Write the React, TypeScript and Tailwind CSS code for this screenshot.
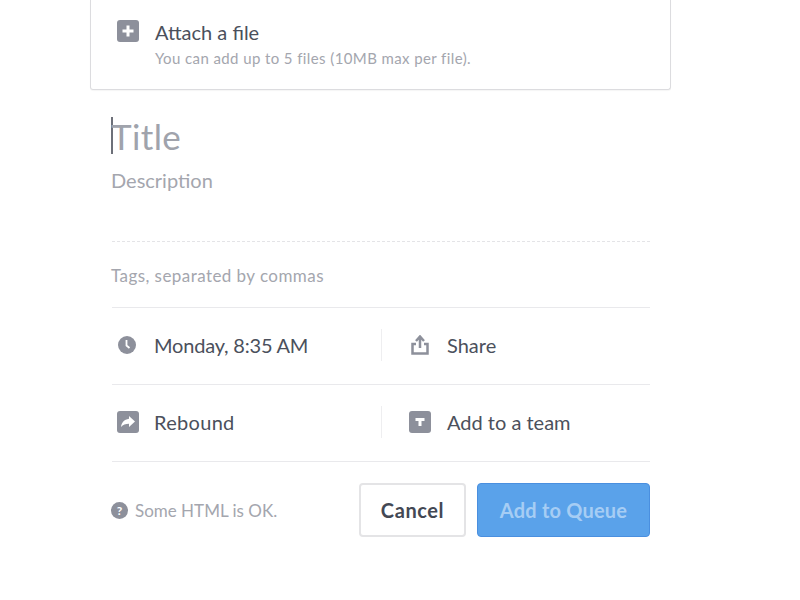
function Divider() {
  return <div className="ml-px h-px bg-[#e9e9ec]" />;
}

function Row({ left, leftLabel, leftClass, right, rightLabel }: { left: React.ReactNode; leftLabel: string; leftClass: string; right: React.ReactNode; rightLabel: string }) {
  return (
    <div className="flex h-[76px] items-center pb-[2px]">
      <div className="flex w-[270px] items-center">
        <div className="flex w-[43px] pl-[6px]">{left}</div>
        <span className={leftClass}>{leftLabel}</span>
      </div>
      <div className="h-[32px] w-px bg-[#eeeef0]" />
      <div className="flex items-center">
        <div className="flex w-[65px] pl-[27px]">{right}</div>
        <span className="text-[20px] text-[#4b505c]">{rightLabel}</span>
      </div>
    </div>
  );
}

export default function App() {
  return (
    <div className="h-[600px] w-[800px] overflow-hidden bg-white font-['Lato','Liberation_Sans',sans-serif]">
      <div className="ml-[90px] w-[581px]">
        <div className="flex h-[90px] rounded-b-[3px] border border-t-0 border-[#dcdcdf] pl-[26px] pt-[20px] shadow-[0_1px_1px_rgba(0,0,0,0.04)]">
          <svg width="22" height="22" viewBox="0 0 22 22" className="shrink-0">
            <rect width="22" height="22" rx="3" fill="#8d909b" />
            <path d="M11 5.500v11M5.500 11h11" stroke="#fff" strokeWidth="3" />
          </svg>
          <div className="ml-[16px]">
            <div className="-mt-px text-[20px] leading-[26px] text-[#4b505c]">Attach a file</div>
            <div className="mt-[3px] text-[15px] leading-[20px] tracking-[0.4px] text-[#a4a6ae]">You can add up to 5 files (10MB max per file).</div>
          </div>
        </div>

        <div className="ml-[21px] w-[539px]">
          <div className="mt-[27px] flex h-[37px] items-center">
            <div className="h-[37px] w-[2px] bg-[#6d7079]" />
            <span className="-ml-[2px] mt-[2px] text-[35px] leading-[37px] tracking-[0.4px] text-[#a0a3ac]">Title</span>
          </div>
          <div className="mt-[13px] text-[20px] leading-[26px] text-[#a4a6ae]">Description</div>
          <div className="mt-[48px] ml-px border-t border-dashed border-[#e4e4e7]" />
          <div className="mt-[23px] text-[17px] leading-[22px] tracking-[0.44px] text-[#a4a6ae]">Tags, separated by commas</div>
          <div className="mt-[20px]">
            <Divider />
          </div>
          <Row
            left={
              <svg width="18" height="18" viewBox="0 0 18 18" className="ml-px">
                <circle cx="9" cy="9" r="9" fill="#8d909b" />
                <path d="M8.500 4v5.500l3 2.500" fill="none" stroke="#fff" strokeWidth="1.800" />
              </svg>
            }
            leftLabel="Monday, 8:35 AM"
            leftClass="text-[20px] tracking-[-0.2px] text-[#4b505c]"
            right={
              <svg width="18" height="20" viewBox="0 0 18 20" fill="none" className="ml-[2px]">
                <path d="M9 13V3M5 6l4-4.500L13 6" stroke="#8d909b" strokeWidth="2.500" />
                <path d="M5 9H1.500v9.500h15V9H13" stroke="#8d909b" strokeWidth="2.500" />
              </svg>
            }
            rightLabel="Share"
          />
          <Divider />
          <Row
            left={
              <svg width="22" height="22" viewBox="0 0 22 22">
                <rect width="22" height="22" rx="3" fill="#8d909b" />
                <path d="M12 5l6 5.500-6 5.500v-3.300c-3.500 0-6 .8-8 3.300.5-4 3-7.500 8-8.200z" fill="#fff" />
              </svg>
            }
            leftLabel="Rebound"
            leftClass="text-[20px] tracking-[0.3px] text-[#4b505c]"
            right={
              <svg width="22" height="22" viewBox="0 0 22 22">
                <rect width="22" height="22" rx="3" fill="#8d909b" />
                <path d="M6.500 7h9v3h-3v5h-3v-5h-3z" fill="#fff" />
              </svg>
            }
            rightLabel="Add to a team"
          />
          <Divider />
          <div className="mt-[21px] flex items-center justify-between">
            <div className="flex items-center gap-[7px]">
              <svg width="17" height="17" viewBox="0 0 17 17">
                <circle cx="8.500" cy="8.500" r="8.500" fill="#8d909b" />
                <text x="8.500" y="12.800" textAnchor="middle" fontSize="12" fontWeight="700" fill="#fff">?</text>
              </svg>
              <span className="mt-px text-[17px] text-[#a4a6ae]">Some HTML is OK.</span>
            </div>
            <div className="flex gap-[11px]">
              <button className="h-[54px] w-[107px] rounded-[4px] border-2 border-[#e4e4e6] bg-white text-[20px] font-bold tracking-[0.6px] text-[#434854]">Cancel</button>
              <button className="h-[54px] w-[173px] rounded-[4px] border border-[#4a8fdf] bg-[#5aa2ea] text-[20px] font-bold tracking-[0.2px] text-[#a6cdf4]">Add to Queue</button>
            </div>
          </div>
        </div>
      </div>
    </div>
  );
}
